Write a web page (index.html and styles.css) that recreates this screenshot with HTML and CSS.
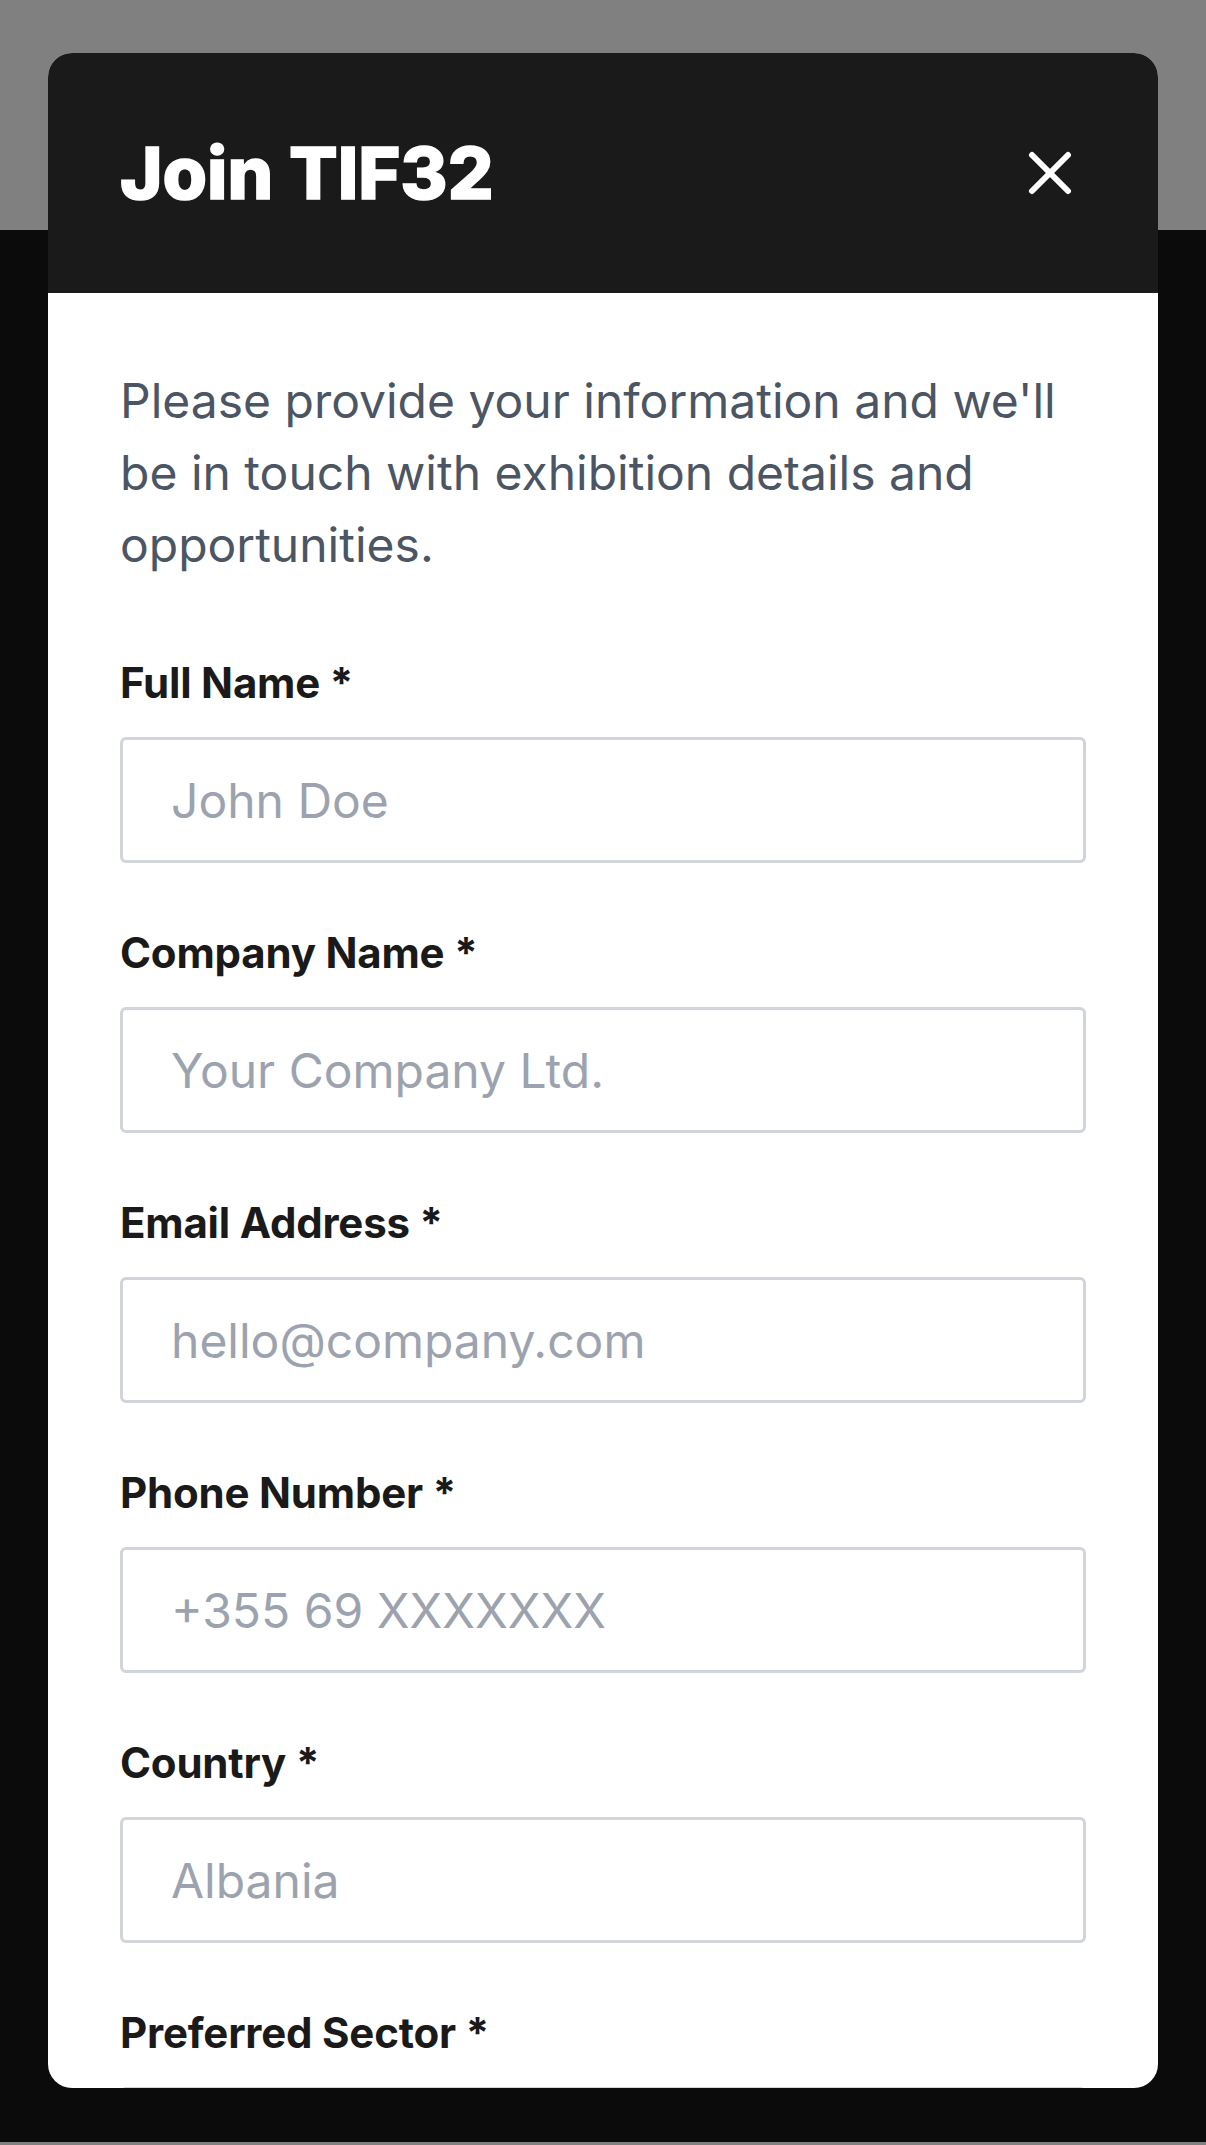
FILE: index.html
```html
<!DOCTYPE html>
<html lang="en">
<head>
<meta charset="utf-8">
<title>Join TIF32</title>
<link rel="stylesheet" href="styles.css">
</head>
<body>
<div class="page">
  <div class="page-top"></div>
  <div class="page-main"></div>
  <div class="page-foot"></div>
</div>

<div class="modal" role="dialog" aria-labelledby="modal-title">
  <header class="modal-header">
    <h2 id="modal-title" class="modal-title">Join TIF32</h2>
    <button class="close-btn" type="button" aria-label="Close">
      <svg viewBox="0 0 24 24" width="72" height="72" fill="none" stroke="#ffffff" stroke-width="2" stroke-linecap="round" stroke-linejoin="round">
        <path d="M18 6 6 18"/>
        <path d="m6 6 12 12"/>
      </svg>
    </button>
  </header>
  <div class="modal-body">
    <p class="intro">Please provide your information and we'll be in touch with exhibition details and opportunities.</p>
    <form class="form">
      <div class="field">
        <label class="label" for="f-name">Full Name *</label>
        <input class="input" id="f-name" type="text" placeholder="John Doe">
      </div>
      <div class="field">
        <label class="label" for="f-company">Company Name *</label>
        <input class="input" id="f-company" type="text" placeholder="Your Company Ltd.">
      </div>
      <div class="field">
        <label class="label" for="f-email">Email Address *</label>
        <input class="input" id="f-email" type="email" placeholder="hello@company.com">
      </div>
      <div class="field">
        <label class="label" for="f-phone">Phone Number *</label>
        <input class="input" id="f-phone" type="tel" placeholder="+355 69 XXXXXXX">
      </div>
      <div class="field">
        <label class="label" for="f-country">Country *</label>
        <input class="input" id="f-country" type="text" placeholder="Albania">
      </div>
      <div class="field">
        <label class="label" for="f-sector">Preferred Sector *</label>
        <input class="input" id="f-sector" type="text" placeholder="Select a sector">
      </div>
    </form>
  </div>
</div>
</body>
</html>
```

FILE: styles.css
```css
* {
  box-sizing: border-box;
}

html, body {
  margin: 0;
  padding: 0;
}

body {
  font-family: "Inter", "Noto Sans", "Liberation Sans", sans-serif;
  background: #0b0b0b;
}

.page {
  display: flex;
  flex-direction: column;
  height: 100vh;
}

.page-top {
  height: 230px;
  background: #808080;
}

.page-main {
  flex: 1;
  background: #0b0b0b;
}

.page-foot {
  height: 3px;
  background: #808080;
}

.modal {
  position: absolute;
  top: 53px;
  left: 48px;
  width: 1110px;
  height: 2035px;
  background: #ffffff;
  border-radius: 24px;
  overflow: hidden;
  display: flex;
  flex-direction: column;
}

.modal-header {
  flex: none;
  height: 240px;
  background: #1a1a1a;
  padding: 0 72px;
  display: flex;
  align-items: center;
  justify-content: space-between;
}

.modal-title {
  margin: 0;
  color: #ffffff;
  font-size: 72px;
  line-height: 96px;
  font-weight: 800;
  letter-spacing: 0;
  -webkit-text-stroke: 1.5px #ffffff;
}

.close-btn {
  width: 72px;
  height: 72px;
  padding: 0;
  border: 0;
  background: transparent;
  display: flex;
  align-items: center;
  justify-content: center;
  cursor: pointer;
}

.close-btn svg {
  display: block;
}

.modal-body {
  flex: 1;
  overflow: hidden;
  padding: 72px 72px 0;
}

.intro {
  margin: 0 0 72px;
  color: #4b5563;
  font-size: 48px;
  line-height: 72px;
  font-weight: 400;
}

.form {
  display: flex;
  flex-direction: column;
  gap: 60px;
}

.field {
  display: flex;
  flex-direction: column;
}

.label {
  color: #1a1a1a;
  font-size: 42px;
  line-height: 60px;
  font-weight: 700;
  letter-spacing: -0.2px;
  margin-bottom: 24px;
}

.input {
  height: 126px;
  width: 100%;
  border: 3px solid #d1d5db;
  border-radius: 6px;
  padding: 0 48px;
  font-family: inherit;
  font-size: 48px;
  color: #111827;
  background: #ffffff;
  outline: none;
}

.input::placeholder {
  color: #9ca3af;
}
```
